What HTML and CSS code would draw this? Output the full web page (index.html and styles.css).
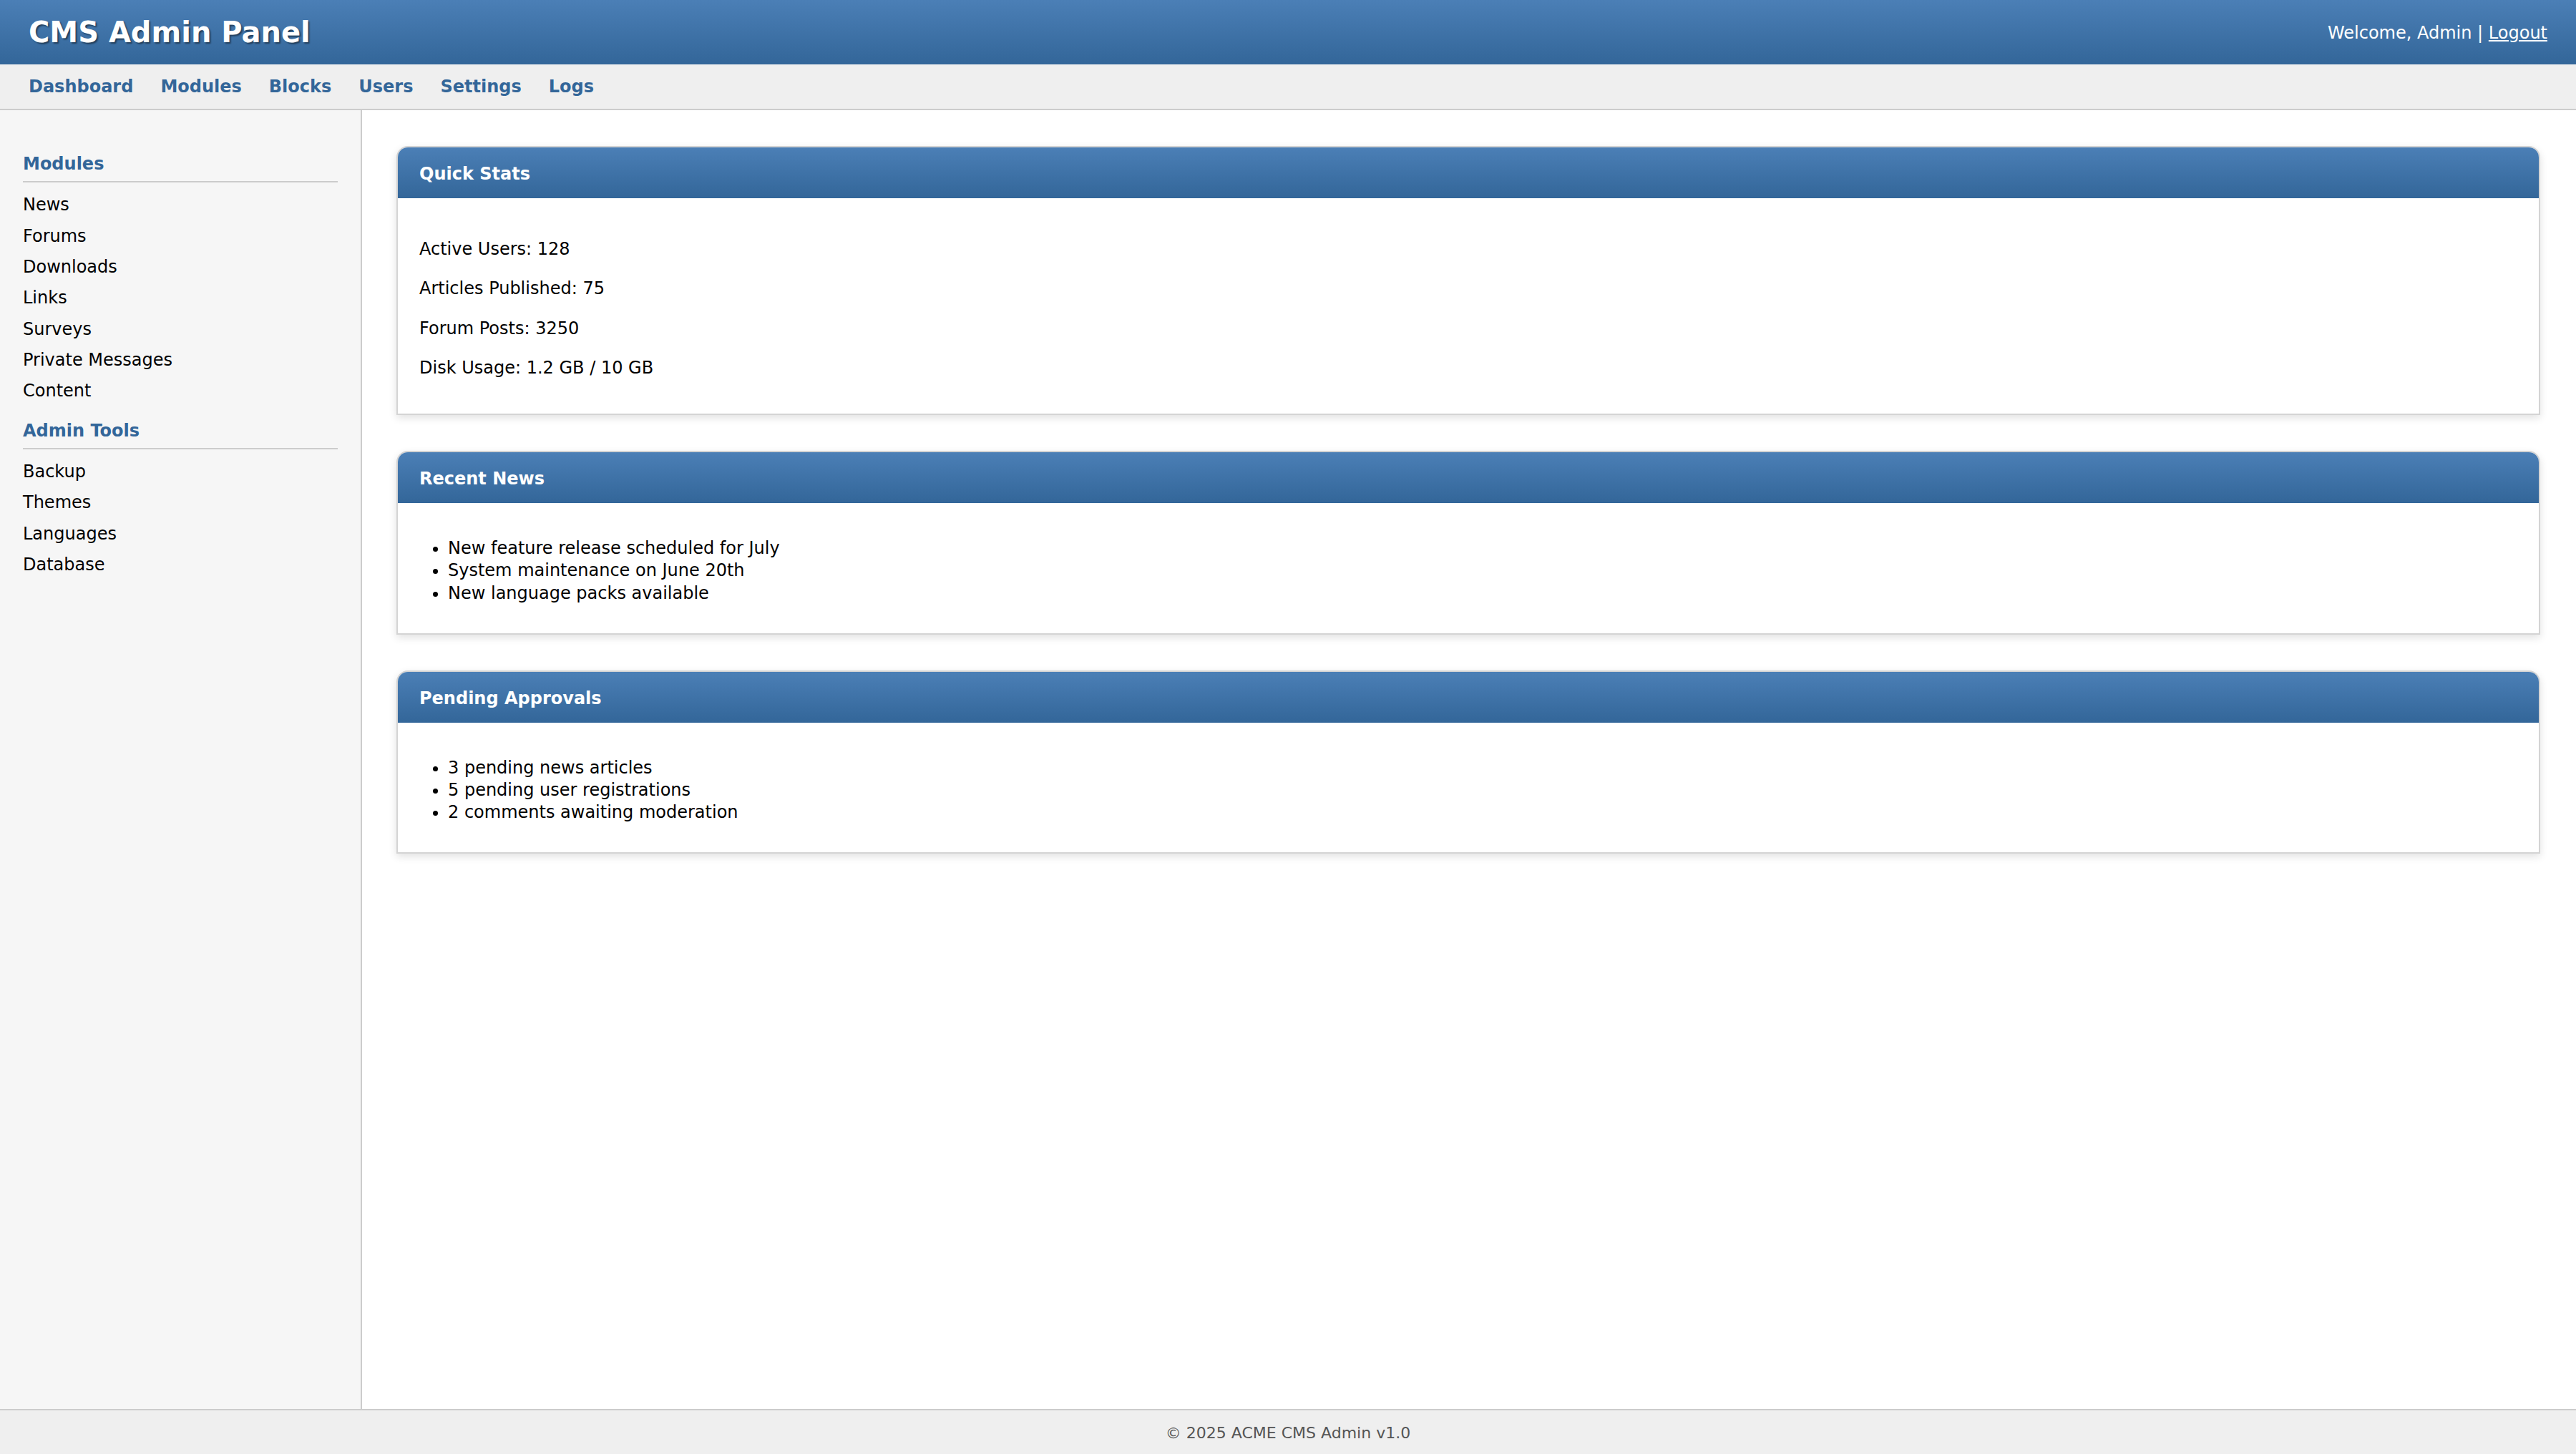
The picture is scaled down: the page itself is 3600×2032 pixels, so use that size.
FILE: index.html
```html
<!DOCTYPE html>
<html lang="en">
<head>
    <meta charset="UTF-8">
    <meta name="viewport" content="width=device-width, initial-scale=1.0">
    <title>CMS Admin Panel</title>
    <link rel="stylesheet" href="styles.css">
</head>
<body>
    <div class="page">
        <header class="topbar">
            <h1>CMS Admin Panel</h1>
            <div class="userinfo">Welcome, Admin | <a href="#">Logout</a></div>
        </header>
        <nav class="mainnav">
            <a href="#">Dashboard</a>
            <a href="#">Modules</a>
            <a href="#">Blocks</a>
            <a href="#">Users</a>
            <a href="#">Settings</a>
            <a href="#">Logs</a>
        </nav>
        <div class="wrap">
            <aside class="sidebar">
                <h3>Modules</h3>
                <ul>
                    <li><a href="#">News</a></li>
                    <li><a href="#">Forums</a></li>
                    <li><a href="#">Downloads</a></li>
                    <li><a href="#">Links</a></li>
                    <li><a href="#">Surveys</a></li>
                    <li><a href="#">Private Messages</a></li>
                    <li><a href="#">Content</a></li>
                </ul>
                <h3>Admin Tools</h3>
                <ul>
                    <li><a href="#">Backup</a></li>
                    <li><a href="#">Themes</a></li>
                    <li><a href="#">Languages</a></li>
                    <li><a href="#">Database</a></li>
                </ul>
            </aside>
            <main class="content">
                <div class="box">
                    <div class="box-title">Quick Stats</div>
                    <div class="box-body">
                        <p>Active Users: 128</p>
                        <p>Articles Published: 75</p>
                        <p>Forum Posts: 3250</p>
                        <p>Disk Usage: 1.2 GB / 10 GB</p>
                    </div>
                </div>
                <div class="box">
                    <div class="box-title">Recent News</div>
                    <div class="box-body">
                        <ul>
                            <li>New feature release scheduled for July</li>
                            <li>System maintenance on June 20th</li>
                            <li>New language packs available</li>
                        </ul>
                    </div>
                </div>
                <div class="box">
                    <div class="box-title">Pending Approvals</div>
                    <div class="box-body">
                        <ul>
                            <li>3 pending news articles</li>
                            <li>5 pending user registrations</li>
                            <li>2 comments awaiting moderation</li>
                        </ul>
                    </div>
                </div>
            </main>
        </div>
        <footer class="footer">&copy; 2025 ACME CMS Admin v1.0</footer>
    </div>
</body>
</html>
```

FILE: styles.css
```css
html {
    zoom: 2;
}
body {
    margin: 0;
    font-family: "DejaVu Sans", Verdana, sans-serif;
    font-size: 12px;
    line-height: 1.3;
    color: #000;
}
.page {
    display: flex;
    flex-direction: column;
    min-height: 1016px;
}
.topbar {
    height: 45px;
    padding: 0 20px;
    display: flex;
    align-items: center;
    justify-content: space-between;
    background: linear-gradient(#4b7fb6, #336699);
    color: #fff;
}
.topbar h1 {
    margin: 0;
    font-size: 20px;
    text-shadow: 1px 1px 1px rgba(0, 0, 0, 0.45);
}
.userinfo {
    padding-top: 2px;
}
.userinfo a {
    color: #fff;
}
.mainnav {
    height: 30px;
    padding: 1px 20px 0;
    display: flex;
    align-items: center;
    gap: 19px;
    background-color: #efefef;
    border-bottom: 1px solid #ccc;
}
.mainnav a {
    color: #336699;
    font-weight: bold;
    text-decoration: none;
}
.wrap {
    flex: 1;
    display: flex;
}
.sidebar {
    width: 220px;
    flex-shrink: 0;
    padding: 21px 16px 20px;
    background-color: #f6f6f6;
    border-right: 1px solid #ccc;
}
.sidebar h3 {
    margin: 9px 0 5px;
    padding-bottom: 4px;
    border-bottom: 1px solid #ccc;
    color: #336699;
    font-size: 12px;
}
.sidebar ul {
    list-style: none;
    margin: 0;
    padding: 0;
}
.sidebar li {
    padding: 3px 0 3.1px;
}
.sidebar a {
    color: #000;
    text-decoration: none;
}
.content {
    flex: 1;
    padding: 25px 25px 25px 24px;
    background-color: #fff;
}
.box {
    margin-bottom: 25px;
    background-color: #fff;
    border: 1px solid #d4d4d4;
    border-radius: 8px 8px 0 0;
    box-shadow: 0 2px 6px rgba(0, 0, 0, 0.12);
}
.box-title {
    padding: 11px 15px 9px;
    background: linear-gradient(#4b7fb6, #336699);
    border-radius: 7px 7px 0 0;
    color: #fff;
    font-weight: bold;
}
.box-body {
    padding: 16px 15px 12px;
}
.box-body p {
    margin: 12px 0;
}
.box-body ul {
    margin: 8px 0;
    padding-left: 20px;
}
.footer {
    padding: 9px 8px 7px;
    background-color: #efefef;
    border-top: 1px solid #ccc;
    text-align: center;
    font-size: 11px;
    color: #555;
}
```
